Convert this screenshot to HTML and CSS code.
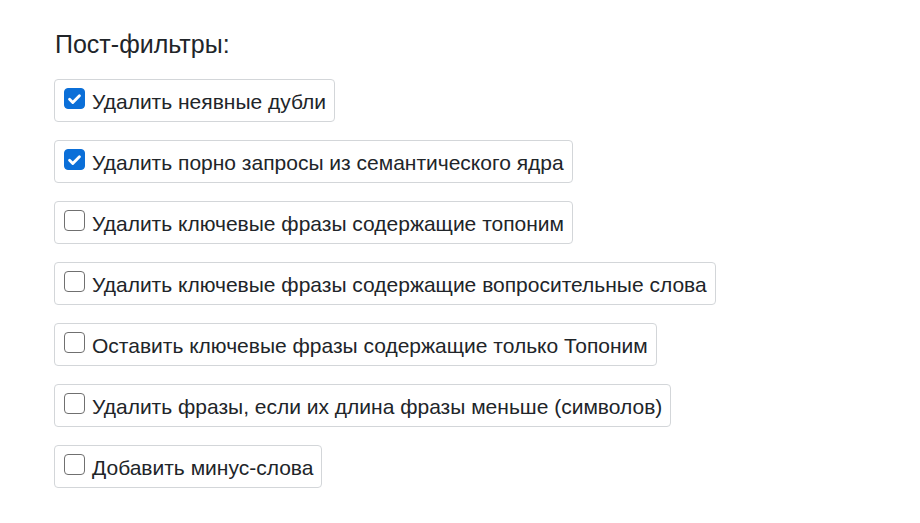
FILE: index.html
```html
<!DOCTYPE html>
<html lang="ru">
<head>
  <meta charset="UTF-8" />
  <title>Пост-фильтры</title>
  <link rel="stylesheet" href="styles.css">
</head>
<body>

<div class="filtros">
  <h3 class="titulo">Пост-фильтры:</h3>

  <label class="opcion">
    <span class="caja marcada"><svg viewBox="0 0 20 20"><path d="M4.8 10.3l3.4 3.4L15.2 6.5" /></svg></span>
    Удалить неявные дубли
  </label>
  <label class="opcion">
    <span class="caja marcada"><svg viewBox="0 0 20 20"><path d="M4.8 10.3l3.4 3.4L15.2 6.5" /></svg></span>
    Удалить порно запросы из семантического ядра
  </label>
  <label class="opcion">
    <span class="caja"></span>
    Удалить ключевые фразы содержащие топоним
  </label>
  <label class="opcion">
    <span class="caja"></span>
    Удалить ключевые фразы содержащие вопросительные слова
  </label>
  <label class="opcion">
    <span class="caja"></span>
    Оставить ключевые фразы содержащие только Топоним
  </label>
  <label class="opcion">
    <span class="caja"></span>
    Удалить фразы, если их длина фразы меньше (символов)
  </label>
  <label class="opcion">
    <span class="caja"></span>
    Добавить минус-слова
  </label>
</div>

</body>
</html>
```

FILE: styles.css
```css
body {
  font-family: "Liberation Sans", Arial, sans-serif;
  color: #212529;
  background-color: #fff;
  margin: 0;
  padding: 0;
}

.filtros {
  display: flex;
  flex-direction: column;
  align-items: flex-start;
  gap: 18px;
  padding: 29px 0 0 54px;
}

.titulo {
  font-size: 25px;
  font-weight: normal;
  line-height: 30px;
  margin: 0 0 2px 1px;
}

.opcion {
  display: inline-flex;
  align-items: center;
  gap: 7px;
  font-size: 21px;
  line-height: 26px;
  padding: 9px 8px 6px 9px;
  border: 1px solid #d3d6d9;
  border-radius: 4px;
  cursor: pointer;
}

.caja {
  align-self: flex-start;
  width: 21px;
  height: 21px;
  margin-top: -1px;
  box-sizing: border-box;
  border: 1.5px solid #707070;
  border-radius: 4px;
  background: #fff;
  display: flex;
  align-items: center;
  justify-content: center;
}

.caja.marcada {
  background-color: #0b6fd8;
  border-color: #0b6fd8;
}

.caja svg {
  width: 20px;
  height: 20px;
  fill: none;
  stroke: #fff;
  stroke-width: 3;
  stroke-linecap: round;
  stroke-linejoin: round;
}
```
